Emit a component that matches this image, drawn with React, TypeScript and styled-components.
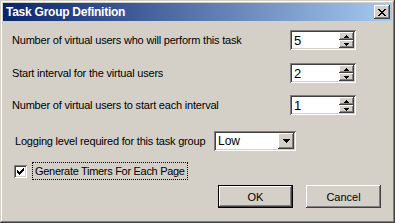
import React from 'react';
import styled, { createGlobalStyle } from 'styled-components';

const GlobalStyle = createGlobalStyle`
  html, body {
    margin: 0;
    padding: 0;
    background: #d4d0c8;
  }
  * {
    box-sizing: border-box;
  }
`;

const raised = `
  box-shadow: inset -1px -1px #404040, inset 1px 1px #ffffff, inset -2px -2px #808080, inset 2px 2px #d4d0c8;
`;

const sunken = `
  box-shadow: inset 1px 1px #808080, inset -1px -1px #ffffff, inset 2px 2px #404040, inset -2px -2px #d4d0c8;
`;

const Window = styled.div`
  width: 395px;
  height: 223px;
  padding: 3px;
  background: #d4d0c8;
  display: flex;
  flex-direction: column;
  box-shadow: inset -1px -1px #404040, inset 1px 1px #d4d0c8, inset -2px -2px #808080, inset 2px 2px #ffffff;
  font-family: "Liberation Sans", Arial, sans-serif;
  font-size: 11px;
  color: #000;
`;

const TitleBar = styled.div`
  height: 18px;
  display: flex;
  align-items: center;
  justify-content: space-between;
  padding: 0 2px 0 2px;
  background: linear-gradient(to right, #0a246a, #a6caf0);
`;

const Title = styled.span`
  color: #fff;
  font-weight: bold;
  font-size: 12px;
  letter-spacing: -0.25px;
  padding-left: 1px;
`;

const CloseButton = styled.div`
  width: 16px;
  height: 14px;
  background: #d4d0c8;
  display: flex;
  align-items: center;
  justify-content: center;
  ${raised}
`;

const Content = styled.div`
  display: flex;
  flex-direction: column;
  padding: 9px 0 0 9px;
`;

const SpinRow = styled.div<{ $top: number }>`
  display: grid;
  grid-template-columns: 278px 66px;
  align-items: center;
  height: 20px;
  margin-top: ${({ $top }) => $top}px;
`;

const Label = styled.span`
  white-space: nowrap;
  letter-spacing: -0.2px;
`;

const Field = styled.div<{ $width: number }>`
  width: ${({ $width }) => $width}px;
  height: 20px;
  background: #fff;
  display: flex;
  align-items: center;
  justify-content: space-between;
  padding: 2px;
  ${sunken}
`;

const FieldText = styled.span<{ $size: number }>`
  font-size: ${({ $size }) => $size}px;
  padding-left: 2px;
`;

const SpinButtons = styled.div`
  display: flex;
  flex-direction: column;
  width: 15px;
  height: 16px;
`;

const SpinButton = styled.div`
  height: 8px;
  background: #d4d0c8;
  display: flex;
  align-items: center;
  justify-content: center;
  ${raised}
`;

const DropButton = styled.div`
  width: 16px;
  height: 16px;
  background: #d4d0c8;
  display: flex;
  align-items: center;
  justify-content: center;
  ${raised}
`;

const LogRow = styled.div`
  display: grid;
  grid-template-columns: 199px 82px;
  align-items: center;
  margin-top: 16px;
  padding-left: 3px;
`;

const CheckRow = styled.div`
  display: flex;
  align-items: center;
  gap: 5px;
  height: 18px;
  margin-top: 11px;
  padding-left: 2px;
`;

const CheckBox = styled.div`
  width: 13px;
  height: 13px;
  background: #fff;
  display: flex;
  align-items: center;
  justify-content: center;
  ${sunken}
`;

const FocusLabel = styled.span`
  border: 1px dotted #000;
  height: 18px;
  display: flex;
  align-items: center;
  padding: 0 2px 0 2px;
  letter-spacing: -0.3px;
`;

const ButtonRow = styled.div`
  display: flex;
  justify-content: flex-end;
  gap: 13px;
  margin-top: 5px;
  padding-right: 11px;
`;

const Button = styled.div<{ $default?: boolean }>`
  width: 75px;
  height: 23px;
  background: #d4d0c8;
  display: flex;
  align-items: center;
  justify-content: center;
  ${({ $default }) =>
    $default
      ? 'box-shadow: inset 0 0 0 1px #000, inset -2px -2px #404040, inset 2px 2px #ffffff, inset -3px -3px #808080;'
      : raised}
`;

const UpArrow = () => (
  <svg width="5" height="3" viewBox="0 0 5 3" shapeRendering="crispEdges">
    <path d="M2 0h1v1h1v1h1v1H0V2h1V1h1z" fill="#000" />
  </svg>
);

const DownArrow = ({ w = 5 }: { w?: number }) => {
  const h = Math.ceil(w / 2);
  return (
    <svg width={w} height={h} viewBox={`0 0 ${w} ${h}`} shapeRendering="crispEdges">
      <polygon points={`0,0 ${w},0 ${w / 2},${h}`} fill="#000" />
    </svg>
  );
};

const Spinner = ({ value }: { value: string }) => (
  <Field $width={66}>
    <FieldText $size={13}>{value}</FieldText>
    <SpinButtons>
      <SpinButton>
        <UpArrow />
      </SpinButton>
      <SpinButton>
        <DownArrow />
      </SpinButton>
    </SpinButtons>
  </Field>
);

const App = () => {
  const rows = [
    { label: 'Number of virtual users who will perform this task', value: '5', top: 0 },
    { label: 'Start interval for the virtual users', value: '2', top: 13 },
    { label: 'Number of virtual users to start each interval', value: '1', top: 12 },
  ];

  return (
    <>
      <GlobalStyle />
      <Window>
        <TitleBar>
          <Title>Task Group Definition</Title>
          <CloseButton>
            <svg width="8" height="7" viewBox="0 0 8 7" shapeRendering="crispEdges">
              <path
                d="M0 0h2v1h1v1h2V1h1V0h2v1H7v1H6v1H5v1h1v1h1v1h1v1H6V6H5V5H3v1H2v1H0V6h1V5h1V4h1V3H2V2H1V1H0z"
                fill="#000"
              />
            </svg>
          </CloseButton>
        </TitleBar>
        <Content>
          {rows.map((r) => (
            <SpinRow key={r.label} $top={r.top}>
              <Label>{r.label}</Label>
              <Spinner value={r.value} />
            </SpinRow>
          ))}
          <LogRow>
            <Label>Logging level required for this task group</Label>
            <Field $width={82}>
              <FieldText $size={12}>Low</FieldText>
              <DropButton>
                <DownArrow w={7} />
              </DropButton>
            </Field>
          </LogRow>
          <CheckRow>
            <CheckBox>
              <svg width="7" height="7" viewBox="0 0 7 7" shapeRendering="crispEdges">
                <path d="M6 0h1v3H6v1H5v1H4v1H3v1H2V6H1V5H0V2h1v1h1v1h1V3h1V2h1V1h1z" fill="#000" />
              </svg>
            </CheckBox>
            <FocusLabel>Generate Timers For Each Page</FocusLabel>
          </CheckRow>
          <ButtonRow>
            <Button $default>OK</Button>
            <Button>Cancel</Button>
          </ButtonRow>
        </Content>
      </Window>
    </>
  );
};

export default App;
